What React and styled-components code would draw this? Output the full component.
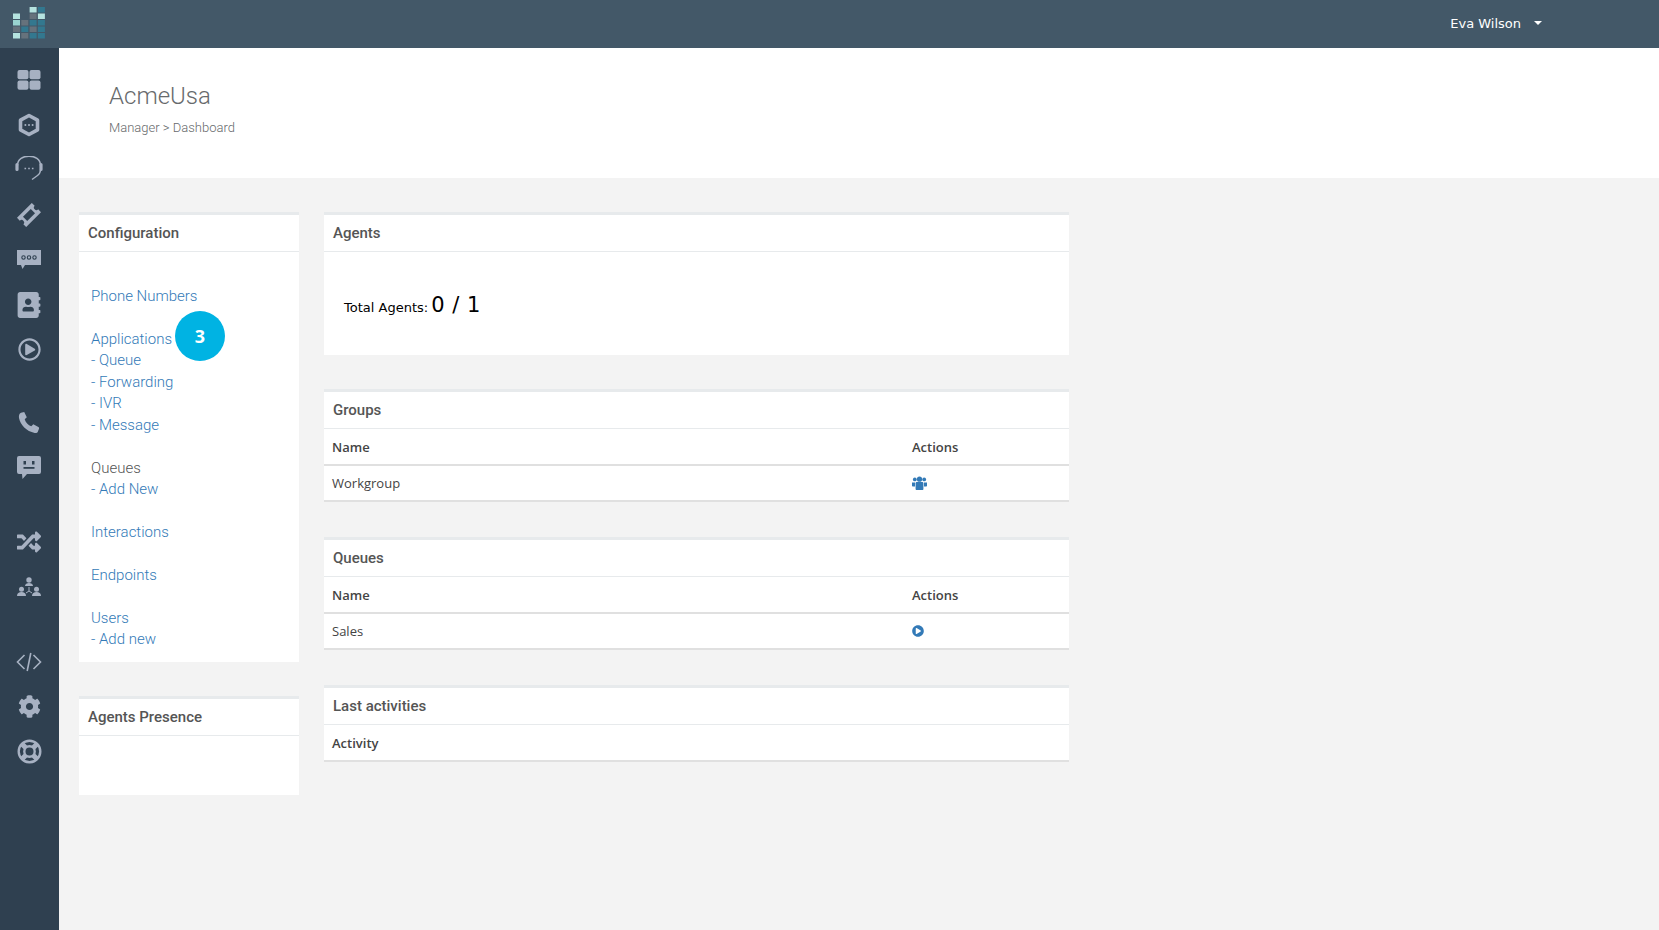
import React from 'react';
import styled, { createGlobalStyle } from 'styled-components';
import { FaAddressBook, FaRegPlayCircle, FaRandom, FaCog, FaPlayCircle } from 'react-icons/fa';

const GlobalStyle = createGlobalStyle`
  html, body {
    margin: 0;
    padding: 0;
    height: 100%;
    background: #f3f3f3;
    font-family: 'Roboto', 'Liberation Sans', sans-serif;
    overflow: hidden;
  }
  * { box-sizing: border-box; }
`;

const Page = styled.div`
  display: flex;
  flex-direction: column;
  height: 930px;
`;

const TopBar = styled.header`
  flex: 0 0 48px;
  display: flex;
  align-items: center;
  justify-content: space-between;
  background: #435868;
  padding: 0 117px 2px 0;
`;

const LogoBox = styled.div`
  width: 59px;
  height: 46px;
  display: flex;
  align-items: center;
  justify-content: center;
`;

const UserMenu = styled.div`
  display: flex;
  align-items: center;
  gap: 13px;
  color: #fff;
  font: 13px 'DejaVu Sans', sans-serif;
`;

const Caret = styled.span`
  width: 0;
  height: 0;
  border-left: 4px solid transparent;
  border-right: 4px solid transparent;
  border-top: 4px solid #fff;
`;

const Body = styled.div`
  flex: 1;
  display: flex;
  min-height: 0;
`;

const Sidebar = styled.nav`
  flex: 0 0 59px;
  background: #2f4050;
  padding: 9px 1px 0 0;
  display: flex;
  flex-direction: column;
`;

const SideGroup = styled.div`
  display: flex;
  flex-direction: column;
  margin-bottom: 29px;
  &:first-child { margin-bottom: 28px; }
  &:nth-child(3) { margin-bottom: 30px; }
`;

const SideItem = styled.div`
  height: 45px;
  display: flex;
  align-items: center;
  justify-content: center;
  color: #a7b1c2;
  svg { display: block; }
`;

const Main = styled.main`
  flex: 1;
  min-width: 0;
`;

const Heading = styled.div`
  height: 130px;
  background: #fff;
  padding: 34px 0 0 50px;
`;

const Title = styled.h2`
  margin: 0;
  font-size: 24px;
  line-height: 28px;
  font-weight: 300;
  color: #676a6c;
`;

const Crumbs = styled.div`
  margin-top: 9px;
  font-size: 13px;
  line-height: 18px;
  font-weight: 300;
  color: #676a6c;
`;

const Content = styled.div`
  display: flex;
  gap: 25px;
  padding: 34px 0 0 20px;
`;

const LeftCol = styled.div`
  width: 220px;
`;

const MidCol = styled.div`
  width: 745px;
`;

const Card = styled.section`
  background: #fff;
  border-top: 3px solid #e7eaec;
  margin-bottom: ${p => p.$gap || 35}px;
`;

const CardTitle = styled.h5`
  margin: 0;
  height: 37px;
  padding-left: 9px;
  border-bottom: 1px solid #e7eaec;
  font-size: 15px;
  line-height: 37px;
  font-weight: 500;
  color: #555;
`;

const LinkList = styled.div`
  position: relative;
  padding: 34px 12px 11.35px;
  font-size: 15px;
  line-height: 21.45px;
  font-weight: 300;
`;

const Line = styled.div`
  color: ${p => (p.$plain ? '#555' : '#337ab7')};
  margin-top: ${p => (p.$spaced ? '21.45px' : '0')};
`;

const Badge = styled.div`
  position: absolute;
  left: 96px;
  top: 59px;
  width: 50px;
  height: 50px;
  border-radius: 50%;
  background: #00b3e3;
  color: #fff;
  display: flex;
  align-items: center;
  justify-content: center;
  font: 700 18px 'Open Sans', sans-serif;
`;

const PresenceBody = styled.div`
  height: 59px;
`;

const AgentsBody = styled.div`
  height: 103px;
  padding: 41px 0 0 20px;
  display: flex;
  align-items: baseline;
  gap: 3px;
  color: #000;
  font-family: 'DejaVu Sans', sans-serif;
  font-size: 13px;
`;

const AgentCount = styled.span`
  font-size: 21px;
  word-spacing: 1px;
`;

const Table = styled.table`
  width: 100%;
  border-collapse: collapse;
  table-layout: fixed;
  font: 13px 'Open Sans', sans-serif;
  color: #444;
`;

const Th = styled.th`
  height: 36px;
  padding: 0 8px;
  text-align: left;
  font-weight: 600;
  border-bottom: 2px solid #e0e0e0;
  width: ${p => p.$w || 'auto'};
`;

const Td = styled.td`
  height: 36px;
  padding: 0 8px;
  border-bottom: 2px solid #e0e0e0;
  svg { display: block; color: #337ab7; }
`;

const Logo = () => {
  const pale = '#b5e3df';
  const mint = '#9ad4d0';
  const gray = '#66727c';
  const teal = '#33788f';
  const cols = [
    [null, pale, mint, gray, pale],
    [null, null, gray, teal, gray],
    [pale, gray, teal, gray, teal],
    [teal, pale, teal, teal, teal],
  ];
  return (
    <svg width="33" height="33" viewBox="0 0 33 33">
      {cols.map((col, x) =>
        col.map((c, y) =>
          c ? <rect key={`${x}-${y}`} x={x * 8.3} y={y * 6.5} width="7" height="5.5" fill={c} /> : null
        )
      )}
    </svg>
  );
};

const DashIcon = () => (
  <svg width="24" height="20" viewBox="0 0 24 20" fill="currentColor">
    <rect x="0.5" y="0" width="11" height="9.3" rx="2" />
    <rect x="12.5" y="0" width="11" height="9.3" rx="2" />
    <rect x="0.5" y="10.5" width="11" height="9.3" rx="2" />
    <rect x="12.5" y="10.5" width="11" height="9.3" rx="2" />
  </svg>
);

const HexIcon = () => (
  <svg width="24" height="24" viewBox="0 0 24 24" fill="none">
    <path d="M12 2.5 20.5 7.2V16.8L12 21.5 3.5 16.8V7.2Z" stroke="currentColor" strokeWidth="3.6" strokeLinejoin="round" />
    <g fill="currentColor">
      <circle cx="8.4" cy="12" r="1" />
      <circle cx="12" cy="12" r="1" />
      <circle cx="15.6" cy="12" r="1" />
    </g>
  </svg>
);

const HeadsetIcon = () => (
  <svg width="28" height="28" viewBox="0 1.5 28 28" fill="none" stroke="currentColor">
    <path d="M2.5 11C2.5 -1.5 25.5 -1.5 25.5 11" strokeWidth="1.5" />
    <path d="M2 10v5M26 10v5" strokeWidth="3.2" strokeLinecap="round" />
    <path d="M25.5 15c0 3-1 4.500-3 6l-5.500 4" strokeWidth="1.4" />
    <path d="M9.500 14h1.600M13.200 14h1.600M16.900 14h1.600" strokeWidth="1.600" />
  </svg>
);

const TicketIcon = () => (
  <svg width="24" height="24" viewBox="0 0 24 24">
    <g transform="rotate(-45 12 12)">
      <path
        fill="currentColor"
        fillRule="evenodd"
        d="M1.500 5.500H22.500V9.500a2.500 2.500 0 0 0 0 5V18.500H1.500V14.500a2.500 2.500 0 0 0 0-5ZM6.500 9V15H17.500V9Z"
      />
    </g>
  </svg>
);

const ChatDotsIcon = () => (
  <svg width="24" height="20" viewBox="0 0 24 20">
    <path fill="currentColor" d="M0 0H24V15H8L5.500 19 4 15H0Z" />
    <g fill="none" stroke="#2f4050" strokeWidth="1.100">
      <circle cx="6.500" cy="7.500" r="1.700" />
      <circle cx="12" cy="7.500" r="1.700" />
      <circle cx="17.500" cy="7.500" r="1.700" />
    </g>
  </svg>
);

const PhoneIcon = () => (
  <svg width="22" height="22" viewBox="0 0 22 22" fill="currentColor">
    <path d="M3 .8 6.200 0l2.600 5.300-2.100 1.900c.8 3 3.500 6 6.600 7l2-2 5.500 3 .3 1.400-1.400 3.300c-.5 1-1.600 1.300-3 1C8.500 19.400 2.300 12.800 1 6 .7 3.500 1.200 1.500 3 .8Z" />
  </svg>
);

const ChatFaceIcon = () => (
  <svg width="24" height="24" viewBox="0 0 24 24">
    <path fill="currentColor" d="M2 0H22a2 2 0 0 1 2 2V16a2 2 0 0 1-2 2H10L5.500 23 5 18H2a2 2 0 0 1-2-2V2a2 2 0 0 1 2-2Z" />
    <rect x="6.500" y="5" width="2.500" height="3.500" fill="#2f4050" />
    <rect x="15" y="5" width="2.500" height="3.500" fill="#2f4050" />
    <rect x="6.500" y="11" width="11" height="1.800" fill="#2f4050" />
  </svg>
);

const TeamIcon = () => (
  <svg width="24" height="20" viewBox="0 0 24 20" fill="currentColor">
    <circle cx="12" cy="3" r="2.700" />
    <path d="M8 9c0-2 2-3 4-3s4 1 4 3Z" />
    <circle cx="4.500" cy="12.300" r="2.500" />
    <path d="M0 19c0-3 2-4 4.500-4S9 16 9 19Z" />
    <circle cx="19.500" cy="12.300" r="2.500" />
    <path d="M15 19c0-3 2-4 4.500-4S24 16 24 19Z" />
    <path d="M12 10v4M12 14l-3 2M12 14l3 2" fill="none" stroke="currentColor" strokeWidth="1" />
  </svg>
);

const CodeIcon = () => (
  <svg width="26" height="20" viewBox="0 0 26 20" fill="none" stroke="currentColor" strokeWidth="1.600">
    <path d="M8.500 3 1.500 10l7 7M17.500 3l7 7-7 7M14.800 1 11.200 19" />
  </svg>
);

const RingIcon = () => (
  <svg width="25" height="25" viewBox="0 0 25 25" fill="none" stroke="currentColor">
    <circle cx="12.500" cy="12.500" r="10.800" strokeWidth="2.400" />
    <circle cx="12.500" cy="12.500" r="5.200" strokeWidth="2.400" />
    <path d="M5 5l4 4M20 5l-4 4M5 20l4-4M20 20l-4-4" strokeWidth="5" />
  </svg>
);

const GroupIcon = () => (
  <svg width="15" height="14" viewBox="0 0 15 14" fill="currentColor">
    <circle cx="2.800" cy="3.400" r="1.900" />
    <circle cx="12.200" cy="3.400" r="1.900" />
    <circle cx="7.500" cy="3.200" r="2.600" />
    <path d="M0 6.500h3v4H0.800C.3 10.500 0 10.200 0 9.800ZM15 6.500h-3v4h2.200c.5 0 .8-.3.8-.7Z" />
    <path d="M3.600 7.200c0-.8.600-1.200 1.200-1.200h5.400c.6 0 1.200.4 1.200 1.200V13c0 .6-.4 1-1 1H4.600c-.6 0-1-.4-1-1Z" />
  </svg>
);

const sideGroups = [
  [
    <DashIcon />,
    <HexIcon />,
    <HeadsetIcon />,
    <TicketIcon />,
    <ChatDotsIcon />,
    <FaAddressBook size={26} />,
    <FaRegPlayCircle size={23} />,
  ],
  [<PhoneIcon />, <ChatFaceIcon />],
  [<FaRandom size={24} />, <TeamIcon />],
  [<CodeIcon />, <FaCog size={23} />, <RingIcon />],
];

const links = [
  { text: 'Phone Numbers' },
  { text: 'Applications', spaced: true },
  { text: '- Queue' },
  { text: '- Forwarding' },
  { text: '- IVR' },
  { text: '- Message' },
  { text: 'Queues', spaced: true, plain: true },
  { text: '- Add New' },
  { text: 'Interactions', spaced: true },
  { text: 'Endpoints', spaced: true },
  { text: 'Users', spaced: true },
  { text: '- Add new' },
];

const DataTable = ({ rows, withActions }) => (
  <Table>
    <thead>
      <tr>
        <Th $w={withActions ? '580px' : undefined}>{withActions ? 'Name' : 'Activity'}</Th>
        {withActions && <Th>Actions</Th>}
      </tr>
    </thead>
    {rows && (
      <tbody>
        {rows.map(r => (
          <tr key={r.name}>
            <Td>{r.name}</Td>
            <Td>{r.icon}</Td>
          </tr>
        ))}
      </tbody>
    )}
  </Table>
);

const App = () => {
  return (
    <Page>
      <GlobalStyle />
      <TopBar>
        <LogoBox>
          <Logo />
        </LogoBox>
        <UserMenu>
          Eva Wilson
          <Caret />
        </UserMenu>
      </TopBar>
      <Body>
        <Sidebar>
          {sideGroups.map((group, i) => (
            <SideGroup key={i}>
              {group.map((icon, j) => (
                <SideItem key={j}>{icon}</SideItem>
              ))}
            </SideGroup>
          ))}
        </Sidebar>
        <Main>
          <Heading>
            <Title>AcmeUsa</Title>
            <Crumbs>Manager &gt; Dashboard</Crumbs>
          </Heading>
          <Content>
            <LeftCol>
              <Card $gap={34}>
                <CardTitle>Configuration</CardTitle>
                <LinkList>
                  {links.map(l => (
                    <Line key={l.text} $spaced={l.spaced} $plain={l.plain}>
                      {l.text}
                    </Line>
                  ))}
                  <Badge>3</Badge>
                </LinkList>
              </Card>
              <Card>
                <CardTitle>Agents Presence</CardTitle>
                <PresenceBody />
              </Card>
            </LeftCol>
            <MidCol>
              <Card $gap={34}>
                <CardTitle>Agents</CardTitle>
                <AgentsBody>
                  Total Agents: <AgentCount>0 / 1</AgentCount>
                </AgentsBody>
              </Card>
              <Card>
                <CardTitle>Groups</CardTitle>
                <DataTable withActions rows={[{ name: 'Workgroup', icon: <GroupIcon /> }]} />
              </Card>
              <Card>
                <CardTitle>Queues</CardTitle>
                <DataTable withActions rows={[{ name: 'Sales', icon: <FaPlayCircle size={12} /> }]} />
              </Card>
              <Card>
                <CardTitle>Last activities</CardTitle>
                <DataTable />
              </Card>
            </MidCol>
          </Content>
        </Main>
      </Body>
    </Page>
  );
};

export default App;
